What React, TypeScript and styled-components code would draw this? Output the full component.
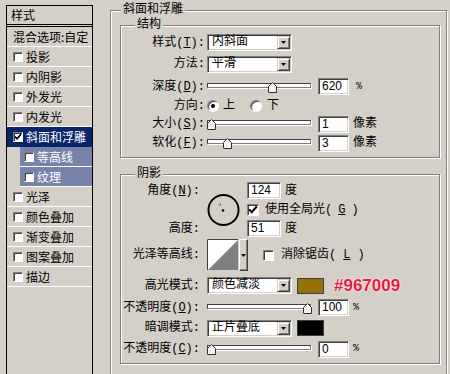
import React from "react";
import styled, { createGlobalStyle } from "styled-components";

const GlobalStyle = createGlobalStyle`
  html, body { margin: 0; padding: 0; background: #d4d0c8; }
  body {
    width: 450px; height: 374px; overflow: hidden;
    font-family: "Liberation Mono", "Noto Sans CJK SC", monospace;
    font-size: 12px; line-height: 14px; color: #000;
  }
  u { text-decoration: underline; text-underline-offset: 1px; }
`;

const Page = styled.div`
  display: flex;
  align-items: flex-start;
  height: 374px;
  overflow: hidden;
`;

/* ---------- sidebar ---------- */
const Sidebar = styled.div`
  flex: none;
  margin: 5px 0 0 6px;
  width: 87px;
  height: 369px;
  box-sizing: border-box;
  border: 1px solid #000;
  border-bottom: none;
  display: flex;
  flex-direction: column;
  font-family: "Noto Sans CJK SC", sans-serif;
`;

const SideHeader = styled.div`
  height: 21px;
  box-sizing: border-box;
  border-bottom: 3px double #000;
  padding-left: 4px;
  display: flex;
  align-items: center;
`;

type RowState = "sel" | "sub" | undefined;

const SideRow = styled.div<{ $state?: RowState }>`
  flex: none;
  height: 20px;
  box-sizing: border-box;
  display: flex;
  align-items: center;
  gap: 3px;
  white-space: nowrap;
  border-bottom: 1px solid ${(p) => (p.$state === "sel" ? "#0a246a" : "#fff")};
  margin-left: ${(p) => (p.$state === "sub" ? 13 : 0)}px;
  padding-left: ${(p) => (p.$state === "sub" ? 4 : 6)}px;
  background: ${(p) =>
    p.$state === "sel" ? "#0a246a" : p.$state === "sub" ? "#7883a9" : "transparent"};
  color: ${(p) => (p.$state ? "#fff" : "#000")};
`;

/* ---------- controls ---------- */
const Check = styled.span<{ $size?: number }>`
  flex: none;
  width: ${(p) => p.$size ?? 10}px;
  height: ${(p) => p.$size ?? 10}px;
  box-sizing: border-box;
  border: 1px solid;
  border-color: #808080 #fff #fff #808080;
  box-shadow: inset 1px 1px 0 #404040;
  background: #fff;
  display: flex;
  align-items: center;
  justify-content: center;
  svg { display: block; }
`;

const CheckMark = ({ size }: { size: number }) => (
  <svg width={size} height={size} viewBox="0 0 8 8">
    <polyline points="1,3.5 3,5.8 7,1.2" fill="none" stroke="#000" strokeWidth="1.7" />
  </svg>
);

const Main = styled.div`
  flex: none;
  margin: 10px 0 0 17px;
`;

const Group = styled.div<{ $w: number; $h: number }>`
  position: relative;
  box-sizing: border-box;
  width: ${(p) => p.$w}px;
  height: ${(p) => p.$h}px;
  border: 1px solid #808080;
  box-shadow: 1px 1px 0 #fff, inset 1px 1px 0 #fff;
`;

const Outer = styled(Group)`
  padding: 14px 0 0 9px;
  border-bottom: none;
`;

const Section = styled(Group)<{ $mt?: number }>`
  margin-top: ${(p) => p.$mt ?? 0}px;
  padding-top: 7px;
`;

const Title = styled.span<{ $left: number }>`
  position: absolute;
  top: -8px;
  left: ${(p) => p.$left}px;
  padding: 0 2px;
  background: #d4d0c8;
  line-height: 14px;
  white-space: nowrap;
`;

const FormGrid = styled.div<{ $cols: string; $gap: number; $rows: string }>`
  display: grid;
  grid-template-columns: ${(p) => p.$cols};
  grid-template-rows: ${(p) => p.$rows};
  column-gap: ${(p) => p.$gap}px;
  align-items: center;
`;

const Label = styled.div<{ $row?: number }>`
  justify-self: end;
  white-space: nowrap;
  ${(p) => (p.$row ? `grid-row: ${p.$row}; grid-column: 1;` : "")}
`;

const Ctrl = styled.div<{ $gap?: number; $row?: number; $col?: number }>`
  display: flex;
  align-items: center;
  gap: ${(p) => p.$gap ?? 4}px;
  white-space: nowrap;
  ${(p) => (p.$row ? `grid-row: ${p.$row};` : "")}
  ${(p) => (p.$col ? `grid-column: ${p.$col};` : "")}
`;

const SelectBox = styled.div<{ $w: number }>`
  flex: none;
  width: ${(p) => p.$w}px;
  height: 17px;
  box-sizing: border-box;
  border: 1px solid;
  border-color: #808080 #fff #fff #808080;
  box-shadow: inset 1px 1px 0 #404040, inset -1px -1px 0 #d4d0c8;
  background: #fff;
  display: flex;
  align-items: center;
  padding: 1px 1px 1px 4px;
`;

const SelectText = styled.span`
  flex: 1;
  line-height: 13px;
`;

const DropBtn = styled.span<{ $h?: number }>`
  flex: none;
  width: 13px;
  height: ${(p) => p.$h ?? 13}px;
  box-sizing: border-box;
  background: #d4d0c8;
  border: 1px solid;
  border-color: #d4d0c8 #404040 #404040 #d4d0c8;
  box-shadow: inset 1px 1px 0 #fff, inset -1px -1px 0 #808080;
  display: flex;
  align-items: center;
  justify-content: center;
`;

const Arrow = () => (
  <svg width="5" height="3" viewBox="0 0 5 3">
    <polygon points="0,0 5,0 2.5,3" fill="#000" />
  </svg>
);

const Select = ({ text, w = 85 }: { text: string; w?: number }) => (
  <SelectBox $w={w}>
    <SelectText>{text}</SelectText>
    <DropBtn>
      <Arrow />
    </DropBtn>
  </SelectBox>
);

const Field = styled.div<{ $w: number }>`
  flex: none;
  width: ${(p) => p.$w}px;
  height: 17px;
  box-sizing: border-box;
  border: 1px solid;
  border-color: #808080 #fff #fff #808080;
  box-shadow: inset 1px 1px 0 #404040, inset -1px -1px 0 #d4d0c8;
  background: #fff;
  padding-left: 3px;
  font-family: "Liberation Sans", Arial, sans-serif;
  font-size: 12px;
  line-height: 15px;
`;

const Unit = styled.span<{ $small?: boolean }>`
  font-size: ${(p) => (p.$small ? 10 : 12)}px;
`;

const SliderWrap = styled.div`
  position: relative;
  flex: none;
  width: 104px;
  height: 14px;
  display: flex;
  flex-direction: column;
`;

const Track = styled.div`
  margin-top: 3px;
  height: 5px;
  box-sizing: border-box;
  border: 1px solid;
  border-color: #404040 #808080 #808080 #404040;
  box-shadow: 1px 1px 0 #fff;
  background: #fff;
`;

const Thumb = styled.span`
  position: absolute;
  top: 2px;
  svg { display: block; }
`;

const Slider = ({ left }: { left: number }) => (
  <SliderWrap>
    <Track />
    <Thumb style={{ left }}>
      <svg width="9" height="11" viewBox="0 0 9 11">
        <path d="M0.5 10.5 V4.5 L4.5 0.5 L8.5 4.5 V10.5 Z" fill="#f2f2f2" />
        <path d="M0.5 10 V4.5 L4.5 0.5" fill="none" stroke="#303030" />
        <path d="M4.5 0.5 L8.5 4.5 V10.5 H0.5" fill="none" stroke="#303030" />
      </svg>
    </Thumb>
  </SliderWrap>
);

const Radio = styled.span<{ $on?: boolean }>`
  flex: none;
  width: 12px;
  height: 12px;
  border-radius: 50%;
  box-sizing: border-box;
  border: 1px solid;
  border-color: #808080 #fff #fff #808080;
  box-shadow: inset 1px 1px 0 #404040;
  background: #fff;
  display: flex;
  align-items: center;
  justify-content: center;
  &::after {
    content: "";
    width: 4px;
    height: 4px;
    border-radius: 50%;
    background: ${(p) => (p.$on ? "#000" : "transparent")};
  }
`;

const Pair = styled.span<{ $gap: number }>`
  display: flex;
  align-items: center;
  gap: ${(p) => p.$gap}px;
`;

const Swatch = styled.span<{ $c: string }>`
  flex: none;
  width: 27px;
  height: 16px;
  box-sizing: border-box;
  border: 1px solid #404040;
  background: ${(p) => p.$c};
`;

const Hex = styled.span`
  margin-left: 5px;
  font-family: "Liberation Sans", Arial, sans-serif;
  font-weight: bold;
  font-size: 17px;
  line-height: 17px;
  color: #e8193c;
  text-shadow: 0 0 2px #fff, 0 0 1px #fff;
`;

const DialCell = styled.div`
  grid-column: 2;
  grid-row: 1 / 4;
  display: flex;
  align-items: center;
  svg { display: block; }
`;

const Contour = styled.div`
  display: flex;
  height: 32px;
  svg { display: block; }
`;

const ContourBtn = styled.span`
  flex: none;
  width: 9px;
  height: 32px;
  box-sizing: border-box;
  background: #d4d0c8;
  border: 1px solid;
  border-color: #fff #404040 #404040 #fff;
  box-shadow: inset -1px -1px 0 #808080;
  display: flex;
  align-items: center;
  justify-content: center;
`;

const sideItems: { t: string; state?: RowState; on?: boolean }[] = [
  { t: "投影" },
  { t: "内阴影" },
  { t: "外发光" },
  { t: "内发光" },
  { t: "斜面和浮雕", state: "sel", on: true },
  { t: "等高线", state: "sub" },
  { t: "纹理", state: "sub" },
  { t: "光泽" },
  { t: "颜色叠加" },
  { t: "渐变叠加" },
  { t: "图案叠加" },
  { t: "描边" },
];

export default function App() {
  return (
    <>
      <GlobalStyle />
      <Page>
        <Sidebar>
          <SideHeader>样式</SideHeader>
          <SideRow>混合选项:自定</SideRow>
          {sideItems.map((it) => (
            <SideRow key={it.t} $state={it.state}>
              <Check>{it.on && <CheckMark size={8} />}</Check>
              {it.t}
            </SideRow>
          ))}
        </Sidebar>

        <Main>
          <Outer $w={337} $h={364}>
            <Title $left={10}>斜面和浮雕</Title>

            <Section $w={320} $h={133}>
              <Title $left={14}>结构</Title>
              <FormGrid $cols="84px 1fr" $gap={2} $rows="19px 24px 21px 18px 18px 20px">
                <Label>样式(<u>T</u>):</Label>
                <Ctrl>
                  <Select text="内斜面" />
                </Ctrl>
                <Label>方法:</Label>
                <Ctrl>
                  <Select text="平滑" />
                </Ctrl>
                <Label>深度(<u>D</u>):</Label>
                <Ctrl $gap={7}>
                  <Slider left={61} />
                  <Field $w={31}>620</Field>
                  <Unit $small>%</Unit>
                </Ctrl>
                <Label>方向:</Label>
                <Ctrl $gap={15}>
                  <Pair $gap={4}>
                    <Radio $on />上
                  </Pair>
                  <Pair $gap={5}>
                    <Radio />下
                  </Pair>
                </Ctrl>
                <Label>大小(<u>S</u>):</Label>
                <Ctrl $gap={7}>
                  <Slider left={0} />
                  <Pair $gap={4}>
                    <Field $w={31}>1</Field>
                    <Unit>像素</Unit>
                  </Pair>
                </Ctrl>
                <Label>软化(<u>F</u>):</Label>
                <Ctrl $gap={7}>
                  <Slider left={16} />
                  <Pair $gap={4}>
                    <Field $w={31}>3</Field>
                    <Unit>像素</Unit>
                  </Pair>
                </Ctrl>
              </FormGrid>
            </Section>

            <Section $w={320} $h={190} $mt={16}>
              <Title $left={14}>阴影</Title>
              <FormGrid $cols="79px 33px 1fr" $gap={7} $rows="17px 21px 17px">
                <Label $row={1}>角度(<u>N</u>):</Label>
                <DialCell>
                  <svg width="34" height="34" viewBox="0 0 34 34">
                    <circle cx="17" cy="17" r="15.5" fill="none" stroke="#000" strokeWidth="2" />
                    <path d="M13.5 9.5 V13.5 M11.5 11.5 H15.5" stroke="#555" strokeWidth="1" strokeDasharray="1 1" />
                    <circle cx="16.5" cy="17.5" r="1.3" fill="#000" />
                  </svg>
                </DialCell>
                <Ctrl $row={1} $col={3}>
                  <Field $w={34}>124</Field>
                  <Unit>度</Unit>
                </Ctrl>
                <Ctrl $row={2} $col={3} $gap={6}>
                  <Check $size={12}>
                    <CheckMark size={10} />
                  </Check>
                  使用全局光(<u>G</u>)
                </Ctrl>
                <Label $row={3}>高度:</Label>
                <Ctrl $row={3} $col={3}>
                  <Field $w={34}>51</Field>
                  <Unit>度</Unit>
                </Ctrl>
              </FormGrid>

              <FormGrid $cols="79px 1fr" $gap={7} $rows="36px 25px 19px 22px 20px">
                <Label>光泽等高线:</Label>
                <Ctrl $gap={15}>
                  <Contour>
                    <svg width="32" height="32" viewBox="0 0 32 32">
                      <rect x="0" y="0" width="32" height="32" fill="#fff" />
                      <polygon points="31,1 31,31 1,31" fill="#808080" />
                      <path d="M0.5 32 V0.5 H32" fill="none" stroke="#404040" />
                      <path d="M31.5 0 V31.5 H0" fill="none" stroke="#d4d0c8" />
                    </svg>
                    <ContourBtn>
                      <Arrow />
                    </ContourBtn>
                  </Contour>
                  <Pair $gap={7}>
                    <Check $size={11} />
                    消除锯齿(<u>L</u>)
                  </Pair>
                </Ctrl>
                <Label>高光模式:</Label>
                <Ctrl $gap={5}>
                  <Select text="颜色减淡" />
                  <Swatch $c="#967009" />
                  <Hex>#967009</Hex>
                </Ctrl>
                <Label>不透明度(<u>O</u>):</Label>
                <Ctrl $gap={7}>
                  <Slider left={96} />
                  <Pair $gap={4}>
                    <Field $w={31}>100</Field>
                    <Unit $small>%</Unit>
                  </Pair>
                </Ctrl>
                <Label>暗调模式:</Label>
                <Ctrl $gap={5}>
                  <Select text="正片叠底" />
                  <Swatch $c="#000" />
                </Ctrl>
                <Label>不透明度(<u>C</u>):</Label>
                <Ctrl $gap={7}>
                  <Slider left={0} />
                  <Pair $gap={4}>
                    <Field $w={31}>0</Field>
                    <Unit $small>%</Unit>
                  </Pair>
                </Ctrl>
              </FormGrid>
            </Section>
          </Outer>
        </Main>
      </Page>
    </>
  );
}
